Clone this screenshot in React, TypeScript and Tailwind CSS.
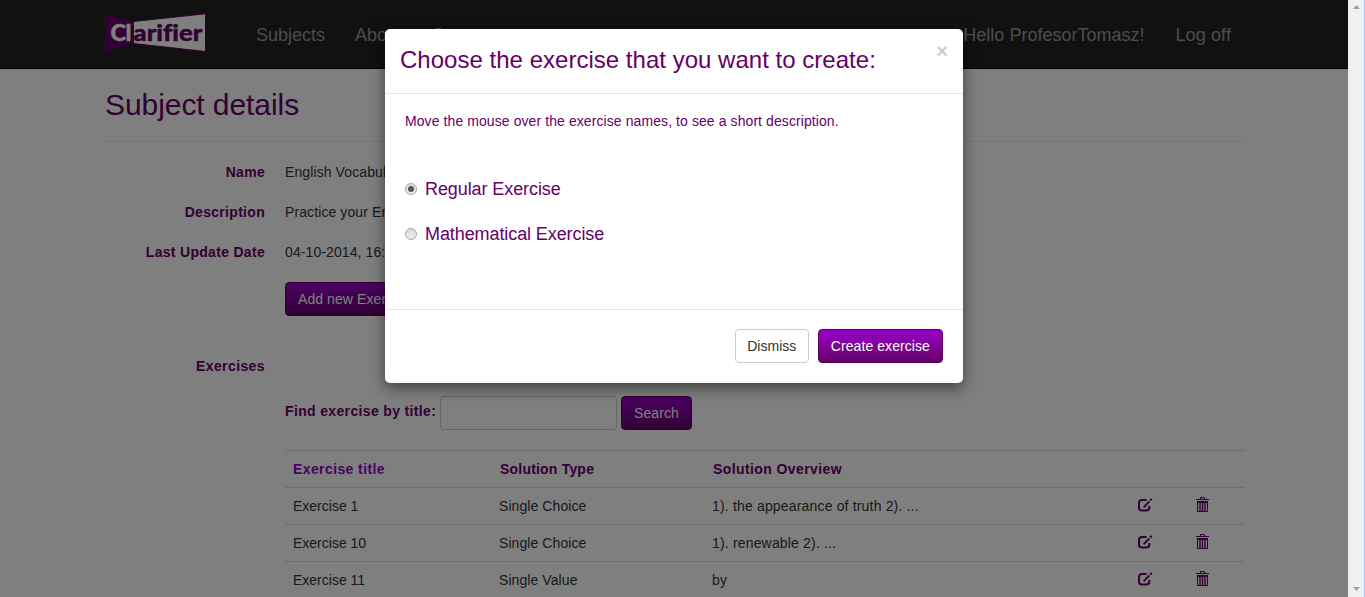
import React from "react";

const rows = [
  ["Exercise 1", "Single Choice", "1). the appearance of truth 2). ..."],
  ["Exercise 10", "Single Choice", "1). renewable 2). ..."],
  ["Exercise 11", "Single Value", "by"],
];

const Logo = () => (
  <svg width="101" height="40" viewBox="0 0 101 40" className="block">
    <path d="M0 0.5L28 8.5V30.5L0 39.5Z" fill="#660066" />
    <path d="M28.5 8.5L100.5 0.8V38.5L28.5 30.5Z" fill="#fff" stroke="#660066" />
    <g fontFamily="Lato" fontWeight="900" fontSize="23.5" strokeWidth="0.4" style={{ fontVariantLigatures: "none" }}>
      <text x="5.5" y="28" fill="#fff" stroke="#fff" textLength="15.5" lengthAdjust="spacingAndGlyphs">C</text>
      <text x="20.6" y="28" fill="#fff" stroke="#fff">l</text>
      <text x="28.5" y="28" fill="#660066" stroke="#660066" textLength="69" lengthAdjust="spacingAndGlyphs">arifier</text>
    </g>
  </svg>
);

const EditIcon = () => (
  <svg width="16" height="14" viewBox="0 0 16 14" fill="none" stroke="#660066" className="block">
    <path d="M9.6 2H5C2.8 2 2 2.9 2 4.8V9.7C2 11.7 3 12.5 5 12.5H9.2C11.4 12.5 12.3 11.6 12.3 9.7V8" strokeWidth="2" />
    <path d="M6.6 9.4L12.4 3.4" strokeWidth="2" />
    <path d="M13.2 2.5L14.8 0.9" strokeWidth="2" />
  </svg>
);

const TrashIcon = () => (
  <svg width="13" height="16" viewBox="0 0 13 16" fill="none" stroke="#660066" className="block">
    <path d="M4.5 2.5V0.5H8.5V2.5M0 2.5H13" />
    <path d="M1 5H12" strokeWidth="2" />
    <path d="M1.5 5V14.5H11.5V5" />
    <path d="M4 6V14M6.5 6V14M9 6V14" strokeWidth="1.4" />
  </svg>
);

const purple =
  "h-[34px] rounded-[4px] border border-[#590059] bg-linear-to-b from-[#9900cc] to-[#660066] text-white text-[14px] leading-[20px] px-[12px] tracking-[0.08px] whitespace-nowrap";

const Radio = ({ label, checked }: { label: string; checked?: boolean }) => (
  <label className="flex h-[45px] items-center text-[18px] tracking-[-0.09px]">
    <span className="mr-2 flex size-3 items-center justify-center rounded-full border border-[#a3a3a3] bg-linear-to-b from-[#dcdcdc] to-[#ededed]">
      {checked && <span className="size-1.5 rounded-full bg-[#555]" />}
    </span>
    {label}
  </label>
);

const Field = ({ name, value }: { name: string; value: string }) => (
  <div className="flex h-10">
    <div className="w-40 shrink-0 text-right font-bold tracking-[0.3px] text-[#660066]">{name}</div>
    <div className="ml-5 tracking-[0.1px]">{value}</div>
  </div>
);

export default function App() {
  return (
    <div
      className="relative flex h-[597px] w-[1365px] overflow-hidden bg-white text-[14px] leading-[20px] text-[#333]"
      style={{ fontFamily: '"Liberation Sans", Arial, sans-serif' }}
    >
      <div className="w-[1348px] shrink-0">
        <nav className="flex h-[69px] border-b border-[#080808] bg-[#222] pr-[117px] pl-[105px] text-[18px] text-[#999]">
          <div className="pt-[13px]"><Logo /></div>
          <div className="flex grow gap-[30px] pt-[25px] pl-[50px]">
            <span>Subjects</span><span>About</span><span>Contact</span>
          </div>
          <div className="flex gap-[31px] pt-[25px]">
            <span>Hello ProfesorTomasz!</span><span className="tracking-[0.12px]">Log off</span>
          </div>
        </nav>
        <main className="pr-[103px] pl-[105px]">
          <h1 className="h-[73px] border-b border-[#eee] pt-[19px] text-[30px] leading-[33px] tracking-[-0.07px] text-[#660066]">Subject details</h1>
          <div className="pt-5">
            <Field name="Name" value="English Vocabulary" />
            <Field name="Description" value="Practice your English" />
            <Field name="Last Update Date" value="04-10-2014, 16:20" />
          </div>
          <div className="pl-[180px]"><button className={purple}>Add new Exercise</button></div>
          <div className="mt-10 w-40 text-right font-bold tracking-[0.4px] text-[#660066]">Exercises</div>
          <div className="pl-[180px]">
            <div className="mt-5 flex gap-1">
              <label className="w-[151px] whitespace-nowrap pt-[5px] font-bold tracking-[0.35px] text-[#660066]">Find exercise by title:</label>
              <input className="h-[34px] w-[177px] rounded-[4px] border border-[#ccc] bg-white" />
              <button className={purple}>Search</button>
            </div>
            <div className="mt-5">
              <div className="grid h-[37px] grid-cols-[207px_213px_425px_58px_57px] border-t border-[#ddd] px-2 pt-2 font-bold text-[#660066]">
                <span className="tracking-[0.4px] text-[#9900cc]">Exercise title</span>
                <span className="tracking-[0.2px]">Solution Type</span>
                <span className="tracking-[0.4px]">Solution Overview</span>
              </div>
              {rows.map((r) => (
                <div key={r[0]} className="grid h-[37px] grid-cols-[206px_213px_425px_58px_50px] border-t border-[#ddd] px-2 pt-2">
                  <span>{r[0]}</span>
                  <span className="tracking-[0.08px]">{r[1]}</span>
                  <span className="tracking-[0.17px]">{r[2]}</span>
                  <span className="pt-[2px]"><EditIcon /></span>
                  <span className="pt-px pl-px"><TrashIcon /></span>
                </div>
              ))}
            </div>
          </div>
        </main>
      </div>
      <div className="flex w-[17px] shrink-0 flex-col items-center justify-between border-r border-[#9fc3f5] bg-[#f0f0f0] pt-[5px] pb-[6px]">
        <svg width="7" height="4" viewBox="0 0 7 4"><path d="M0 4L3.5 0L7 4Z" fill="#a0a0a0" /></svg>
        <svg width="7" height="4" viewBox="0 0 7 4"><path d="M0 0H7L3.5 4Z" fill="#a0a0a0" /></svg>
      </div>
      <div className="absolute inset-y-0 left-0 w-[1348px] bg-black/50" />
      <section className="absolute top-[29px] left-[385px] flex h-[354px] w-[578px] flex-col rounded-[5px] bg-white text-[#660066] shadow-[0_5px_15px_rgba(0,0,0,0.5)]">
        <header className="flex h-[65px] justify-between border-b border-[#e5e5e5] pt-[14px] pr-[15px] pl-[15px]">
          <h2 className="text-[24px] leading-[34px] tracking-[0.02px]">Choose the exercise that you want to create:</h2>
          <button className="h-[14px] text-[20px] leading-[17px] font-bold text-[#ccc]">×</button>
        </header>
        <div className="h-[216px] border-b border-[#e5e5e5] px-5 pt-[17px]">
          <p className="tracking-[0.085px]">Move the mouse over the exercise names, to see a short description.</p>
          <div className="pt-[35px]">
            <Radio label="Regular Exercise" checked />
            <Radio label="Mathematical Exercise" />
          </div>
        </div>
        <footer className="flex justify-end gap-[9px] pt-[19px] pr-5">
          <button className="h-[34px] w-[74px] rounded-[4px] border border-[#ccc] bg-white text-[#333]">Dismiss</button>
          <button className={purple}>Create exercise</button>
        </footer>
      </section>
    </div>
  );
}
